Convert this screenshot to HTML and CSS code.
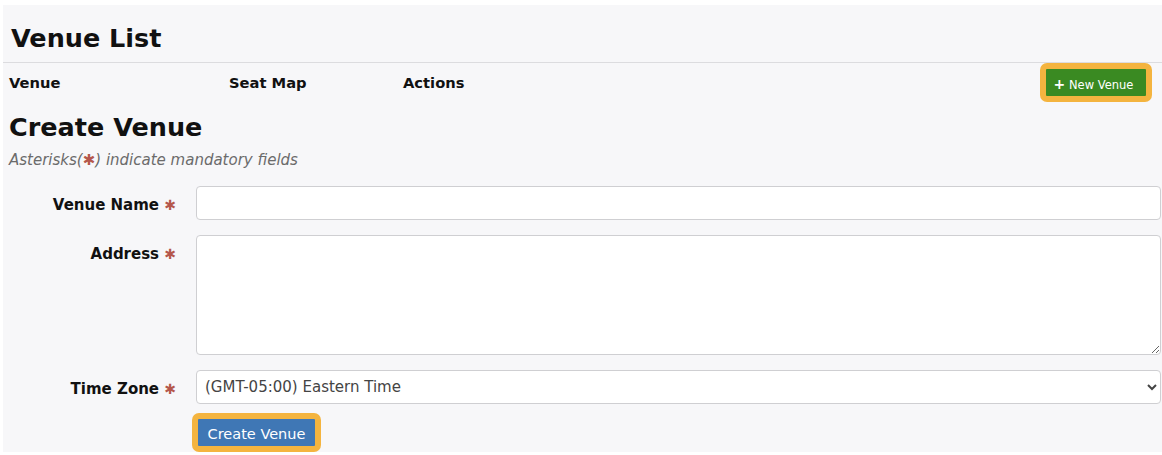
FILE: index.html
```html
<!DOCTYPE html>
<html>
<head>
<meta charset="utf-8">
<link rel="stylesheet" href="styles.css">
</head>
<body>
<div class="page">
  <h1 class="title">Venue List</h1>
  <div class="list-head">
    <div class="col col-venue">Venue</div>
    <div class="col col-map">Seat Map</div>
    <div class="col col-actions">Actions</div>
    <div class="col col-btn">
      <span class="ring ring-green"><button class="btn btn-green"><span class="plus">+</span> New Venue</button></span>
    </div>
  </div>
  <h2 class="title title2">Create Venue</h2>
  <p class="note">Asterisks(<span class="req">✱</span>) indicate mandatory fields</p>
  <form class="form">
    <label class="lbl">Venue Name <span class="req">✱</span></label>
    <div class="field"><input class="inp" type="text"></div>
    <label class="lbl">Address <span class="req">✱</span></label>
    <div class="field"><textarea class="inp ta"></textarea></div>
    <label class="lbl">Time Zone <span class="req">✱</span></label>
    <div class="field"><select class="inp sel"><option>(GMT-05:00) Eastern Time</option></select></div>
    <div></div>
    <div class="field field-btn"><span class="ring ring-blue"><button type="button" class="btn btn-blue">Create Venue</button></span></div>
  </form>
</div>
</body>
</html>
```
FILE: styles.css
```css
html, body { margin: 0; padding: 0; background: #fff; }
body { font-family: "DejaVu Sans", Verdana, sans-serif; color: #111; }
.page {
  margin: 5px 0 0 3px;
  height: 447px;
  background: #f7f7f9;
  box-sizing: border-box;
  padding: 0;
}
.title {
  margin: 0;
  font-size: 25.5px;
  font-weight: bold;
  padding: 18px 0 9px 8px;
  line-height: 30px;
}
.title2 { padding: 0 0 0 6px; margin-top: 9px; }
.list-head {
  border-top: 1px solid #dcdcdf;
  display: flex;
  align-items: center;
  height: 39px;
  font-weight: bold;
  font-size: 14.7px;
}
.title2 { margin-top: 10px; }
.col-venue { width: 220px; padding-left: 6px; }
.col-map { width: 174px; }
.col-actions { flex: 1; }
.col-btn { padding-right: 10px; }
.ring {
  display: inline-block;
  background: #f4b43f;
  border-radius: 7px;
  padding: 6px;
  line-height: 0;
}
.btn {
  border: none;
  font-family: "DejaVu Sans", Verdana, sans-serif;
  color: #fff;
  cursor: pointer;
  margin: 0;
}
.btn-green {
  background: #3a8a22;
  font-size: 11.5px;
  height: 27px;
  width: 100px;
  padding: 2px 5px 0 0;
  border-radius: 1px;
}
.plus { font-weight: bold; font-size: 14px; }
.note {
  margin: 9px 0 0 6px;
  font-style: italic;
  color: #6b6b6b;
  font-size: 15px;
}
.req { color: #b5574c; font-style: normal; }
.form {
  display: grid;
  grid-template-columns: 193px 1fr;
  row-gap: 15px;
  margin-top: 17px;
  padding-right: 1px;
}
.lbl {
  text-align: right;
  padding-right: 20px;
  font-weight: bold;
  font-size: 15px;
  padding-top: 9.5px;
}
.lbl .req { font-size: 14px; }
.inp {
  display: block;
  width: 100%;
  box-sizing: border-box;
  height: 34px;
  border: 1px solid #cfcfd2;
  border-radius: 4px;
  background: #fff;
  margin: 0;
  font-family: "DejaVu Sans", Verdana, sans-serif;
  font-size: 15px;
  color: #444;
}
.ta { height: 120px; resize: vertical; }
.sel { padding-left: 4px; }
.field-btn { margin-top: -6px; margin-left: -4px; }
.btn-blue {
  background: #3f77b5;
  font-size: 14.5px;
  height: 27px;
  width: 117px;
  padding: 2px 0 0 0;
  border-radius: 1px;
}
```
